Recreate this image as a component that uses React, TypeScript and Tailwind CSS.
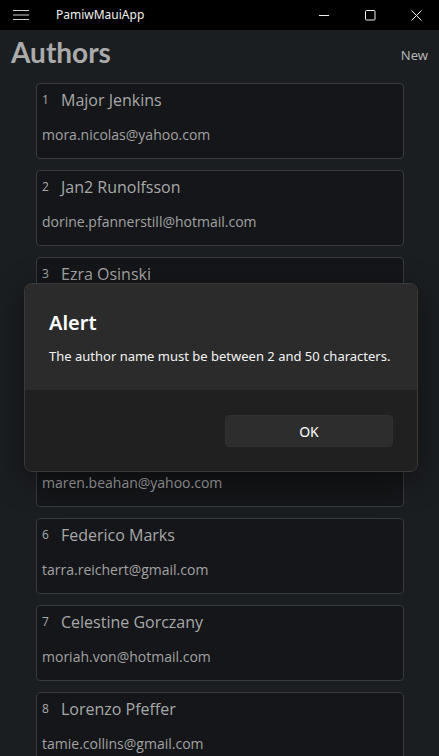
import React from 'react';

type Author = { id: number; name: string; email: string };

const authors: Author[] = [
  { id: 1, name: 'Major Jenkins', email: 'mora.nicolas@yahoo.com' },
  { id: 2, name: 'Jan2 Runolfsson', email: 'dorine.pfannerstill@hotmail.com' },
  { id: 3, name: 'Ezra Osinski', email: 'ezra.osinski@gmail.com' },
  { id: 4, name: 'Kailey Kunze', email: 'kailey.kunze@gmail.com' },
  { id: 5, name: 'Maren Beahan', email: 'maren.beahan@yahoo.com' },
  { id: 6, name: 'Federico Marks', email: 'tarra.reichert@gmail.com' },
  { id: 7, name: 'Celestine Gorczany', email: 'moriah.von@hotmail.com' },
  { id: 8, name: 'Lorenzo Pfeffer', email: 'tamie.collins@gmail.com' },
];

const TitleBar = () => (
  <div className="flex h-[30px] items-center bg-black text-white">
    <svg width="16" height="12" viewBox="0 0 16 12" className="ml-[13px]" fill="none" stroke="#cfcfcf" strokeWidth="1">
      <path d="M0 1.5h16M0 6h16M0 10.5h16" />
    </svg>
    <span className="ml-[27px] text-[12px] [font-family:'Noto_Sans',sans-serif] text-[#f0f0f0]">PamiwMauiApp</span>
    <div className="ml-auto flex h-full items-center">
      <div className="flex w-[46px] justify-center">
        <svg width="11" height="11" viewBox="0 0 11 11" stroke="#f0f0f0" strokeWidth="1">
          <path d="M0 5.5h10" />
        </svg>
      </div>
      <div className="flex w-[46px] justify-center">
        <svg width="11" height="11" viewBox="0 0 11 11" fill="none" stroke="#f0f0f0" strokeWidth="1">
          <rect x="0.5" y="0.5" width="9.5" height="9.5" rx="1" />
        </svg>
      </div>
      <div className="flex w-[46px] justify-center">
        <svg width="11" height="11" viewBox="0 0 11 11" stroke="#f0f0f0" strokeWidth="1">
          <path d="M0.5 0.5l10 10M10.5 0.5l-10 10" />
        </svg>
      </div>
    </div>
  </div>
);

const AuthorCard = ({ author }: { author: Author }) => (
  <div className="flex h-[76px] shrink-0 flex-col rounded-[4px] border border-[#383b3f] bg-[#141619] px-[5px] [font-family:'Open_Sans',sans-serif]">
    <div className="mt-[4px] flex h-[24px] items-center">
      <span className="w-[19px] text-[12px] text-[#aaaaaa]">{author.id}</span>
      <span className="text-[16px] text-[#a8a8a8]">{author.name}</span>
    </div>
    <div className="mt-[13px] text-[14px] leading-[20px] text-[#a2a2a2]">{author.email}</div>
  </div>
);

const AlertDialog = () => (
  <div className="absolute left-[24px] top-[283px] w-[394px] overflow-hidden rounded-[8px] border border-[#3a3a3a] shadow-[0_8px_32px_rgba(0,0,0,0.45)] [font-family:'Noto_Sans',sans-serif]">
    <div className="h-[106px] bg-[#2b2b2b] px-[24px] pt-[25px]">
      <div className="text-[20px] font-semibold leading-[28px] text-white">Alert</div>
      <div className="mt-[9px] text-[13px] leading-[20px] text-[#f2f2f2]">
        The author name must be between 2 and 50 characters.
      </div>
    </div>
    <div className="flex h-[81px] justify-end bg-[#202020] px-[24px] pt-[25px]">
      <button className="h-[32px] w-[168px] rounded-[4px] border border-[#303030] bg-[#2d2d2d] text-[14px] text-white">
        OK
      </button>
    </div>
  </div>
);

export default function App() {
  return (
    <div className="relative h-[756px] w-[439px] overflow-hidden bg-[#1b1e21]">
      <TitleBar />
      <div className="flex h-[45px] items-center justify-between pl-[11px] pr-[11px]">
        <span className="mt-[-2px] text-[28px] font-bold text-[#ababab] [font-family:Lato,sans-serif]">Authors</span>
        <span className="mt-[6px] text-[13px] text-[#b4b4b4] [font-family:'Noto_Sans',sans-serif]">New</span>
      </div>
      <div className="mt-[8px] flex flex-col gap-[11px] pl-[36px] pr-[35px]">
        {authors.map((a) => (
          <AuthorCard key={a.id} author={a} />
        ))}
      </div>
      <AlertDialog />
    </div>
  );
}
